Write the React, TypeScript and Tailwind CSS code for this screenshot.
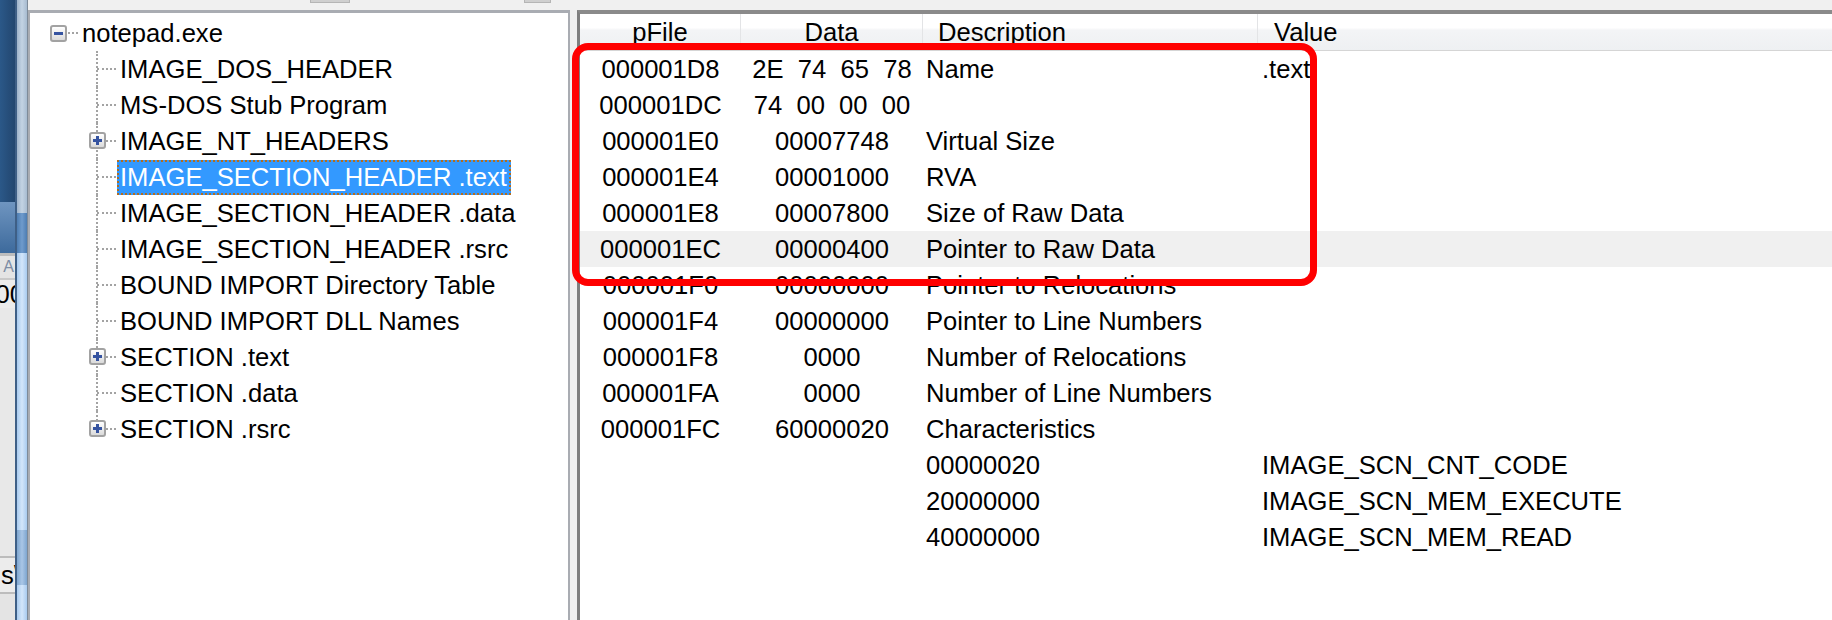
import React from "react";

type Row = { p?: string; d?: string; desc?: string; v?: string; hl?: boolean };

const rows: Row[] = [
  { p: "000001D8", d: "2E  74  65  78", desc: "Name", v: ".text" },
  { p: "000001DC", d: "74  00  00  00" },
  { p: "000001E0", d: "00007748", desc: "Virtual Size" },
  { p: "000001E4", d: "00001000", desc: "RVA" },
  { p: "000001E8", d: "00007800", desc: "Size of Raw Data" },
  { p: "000001EC", d: "00000400", desc: "Pointer to Raw Data", hl: true },
  { p: "000001F0", d: "00000000", desc: "Pointer to Relocations" },
  { p: "000001F4", d: "00000000", desc: "Pointer to Line Numbers" },
  { p: "000001F8", d: "0000", desc: "Number of Relocations" },
  { p: "000001FA", d: "0000", desc: "Number of Line Numbers" },
  { p: "000001FC", d: "60000020", desc: "Characteristics" },
  { desc: "00000020", v: "IMAGE_SCN_CNT_CODE" },
  { desc: "20000000", v: "IMAGE_SCN_MEM_EXECUTE" },
  { desc: "40000000", v: "IMAGE_SCN_MEM_READ" },
];

type Node = { label: string; plus?: boolean; sel?: boolean; last?: boolean };

const tree: Node[] = [
  { label: "IMAGE_DOS_HEADER" },
  { label: "MS-DOS Stub Program" },
  { label: "IMAGE_NT_HEADERS", plus: true },
  { label: "IMAGE_SECTION_HEADER .text", sel: true },
  { label: "IMAGE_SECTION_HEADER .data" },
  { label: "IMAGE_SECTION_HEADER .rsrc" },
  { label: "BOUND IMPORT Directory Table" },
  { label: "BOUND IMPORT DLL Names" },
  { label: "SECTION .text", plus: true },
  { label: "SECTION .data" },
  { label: "SECTION .rsrc", plus: true, last: true },
];

function ExpandBox({ minus }: { minus?: boolean }) {
  return (
    <div className="relative w-[17px] h-[17px] rounded-[3px] border-2 border-[#a2a2a2] bg-[linear-gradient(180deg,#ffffff,#dadada)] flex items-center justify-center">
      <div className="absolute w-[9px] h-[3px] bg-[#3553a0]" />
      {!minus && <div className="absolute w-[3px] h-[9px] bg-[#3553a0]" />}
    </div>
  );
}

export default function App() {
  return (
    <div className="relative w-[1832px] h-[620px] overflow-hidden flex bg-[#f0f0f0] font-['Liberation_Sans',Arial,sans-serif] text-[25.6px] text-black">
      {/* background window fragment */}
      <div className="w-[15px] shrink-0 flex flex-col overflow-hidden">
        <div className="h-[202px] bg-[linear-gradient(90deg,#2b5888,#22466f)]" />
        <div className="h-[51px] bg-[linear-gradient(180deg,#6f95c0,#3d6a9c)]" />
        <div className="h-[3px] bg-[#bdbdbd]" />
        <div className="h-[22px] bg-[#e4e4e4] flex justify-end overflow-hidden text-[16px] leading-[22px] text-[#7d8da5] pr-[1px]">
          A
        </div>
        <div className="h-[2px] bg-[#c9c9c9]" />
        <div className="h-[28px] bg-[#ececec] flex justify-end overflow-hidden leading-[28px] whitespace-nowrap mr-[-9px]">
          00
        </div>
        <div className="flex-1 bg-[#e8e8e8]" />
        <div className="h-[2px] bg-[#bcbcbc]" />
        <div className="h-[34px] bg-[#ececec] flex justify-end overflow-hidden leading-[34px] whitespace-nowrap mr-[-6px]">
          s\
        </div>
        <div className="h-[2px] bg-[#bcbcbc]" />
        <div className="h-[26px] bg-[#e4e4e4]" />
      </div>

      {/* window frame */}
      <div className="w-[13px] shrink-0 flex flex-col border-l-2 border-l-[#3e5f86] border-r border-r-[#7e8b99]">
        <div className="h-[213px] bg-[linear-gradient(90deg,#9fb4cb,#c3d3e3,#a7bbd0)]" />
        <div className="h-[40px] bg-[linear-gradient(90deg,#4d7db2,#6f9bcc,#4d7db2)]" />
        <div className="h-[277px] bg-[linear-gradient(90deg,#a9cbef,#d3e6fa,#a9cbef)]" />
        <div className="h-[55px] bg-[linear-gradient(90deg,#7ea6d0,#a9c6e6,#7ea6d0)]" />
        <div className="flex-1 bg-[linear-gradient(90deg,#a9cbef,#d3e6fa,#a9cbef)]" />
      </div>

      {/* main area */}
      <div className="flex-1 flex flex-col min-w-0">
        {/* toolbar remnant */}
        <div className="h-[10px] shrink-0 flex items-start">
          <div className="ml-[282px] w-[40px] h-[3px] bg-[#cfcfcf] border-x border-b border-[#b5b5b5]" />
          <div className="ml-[174px] w-[27px] h-[3px] bg-[#cfcfcf] border-x border-b border-[#b5b5b5]" />
        </div>

        <div className="flex-1 flex min-h-0">
          {/* tree pane */}
          <div className="w-[542px] shrink-0 bg-white border-l-2 border-r-2 border-t-[3px] border-[#a9acb2] pt-[2px] leading-[36px] whitespace-nowrap">
            {/* root */}
            <div className="h-[36px] flex items-center">
              <div className="w-[20px] shrink-0" />
              <ExpandBox minus />
              <div className="ml-[1px] w-[10px] border-t-2 border-dotted border-[#a3a3a3]" />
              <span className="ml-[4px]">notepad.exe</span>
            </div>
            {tree.map((n, i) => (
              <div key={i} className="h-[36px] flex items-center">
                <div className="w-[59px] shrink-0" />
                <div className="relative w-[28px] h-full shrink-0">
                  <div
                    className={
                      "absolute left-[7px] top-0 border-l-2 border-dotted border-[#a3a3a3] " +
                      (n.last ? "h-[18px]" : "h-[36px]")
                    }
                  />
                  <div className="absolute left-[8px] top-[17px] w-[19px] border-t-2 border-dotted border-[#a3a3a3]" />
                  {n.plus && (
                    <div className="absolute left-0 top-[9px]">
                      <ExpandBox />
                    </div>
                  )}
                </div>
                <span
                  className={
                    "h-[35px] flex items-center pl-[1px] pr-[2px] border-2 " +
                    (n.sel
                      ? "bg-[#3399ff] text-white border-dotted border-[#b36d1f]"
                      : "border-transparent")
                  }
                >
                  {n.label}
                </span>
              </div>
            ))}
          </div>

          {/* splitter */}
          <div className="w-[7px] shrink-0" />

          {/* list pane */}
          <div className="flex-1 min-w-0 bg-white border-l-[3px] border-l-[#7f7f7f] border-t-[4px] border-t-[#8a8a8a] leading-[36px] whitespace-nowrap">
            {/* header */}
            <div className="h-[37px] flex border-b border-[#d5d5d5] bg-[linear-gradient(180deg,#ffffff_0%,#ffffff_38%,#f3f4f6_45%,#eef0f2_100%)]">
              <div className="w-[161px] shrink-0 text-center border-r border-[#e3e4e6]">pFile</div>
              <div className="w-[182px] shrink-0 text-center border-r border-[#e3e4e6]">Data</div>
              <div className="w-[335px] shrink-0 pl-[15px] border-r border-[#e3e4e6]">Description</div>
              <div className="flex-1 pl-[16px]">Value</div>
            </div>
            {/* rows */}
            {rows.map((r, i) => (
              <div key={i} className={"h-[36px] flex " + (r.hl ? "bg-[#f0f0f0]" : "")}>
                <div className="w-[161px] shrink-0 text-center">{r.p ?? ""}</div>
                <div className="w-[182px] shrink-0 text-center whitespace-pre">{r.d ?? ""}</div>
                <div className="w-[335px] shrink-0 pl-[3px]">{r.desc ?? ""}</div>
                <div className="flex-1 pl-[4px]">{r.v ?? ""}</div>
              </div>
            ))}
          </div>
        </div>
      </div>

      {/* red annotation box */}
      <div className="absolute left-[572px] top-[43px] w-[745px] h-[243px] border-[7px] border-[#ff0000] rounded-[16px] pointer-events-none" />
    </div>
  );
}
